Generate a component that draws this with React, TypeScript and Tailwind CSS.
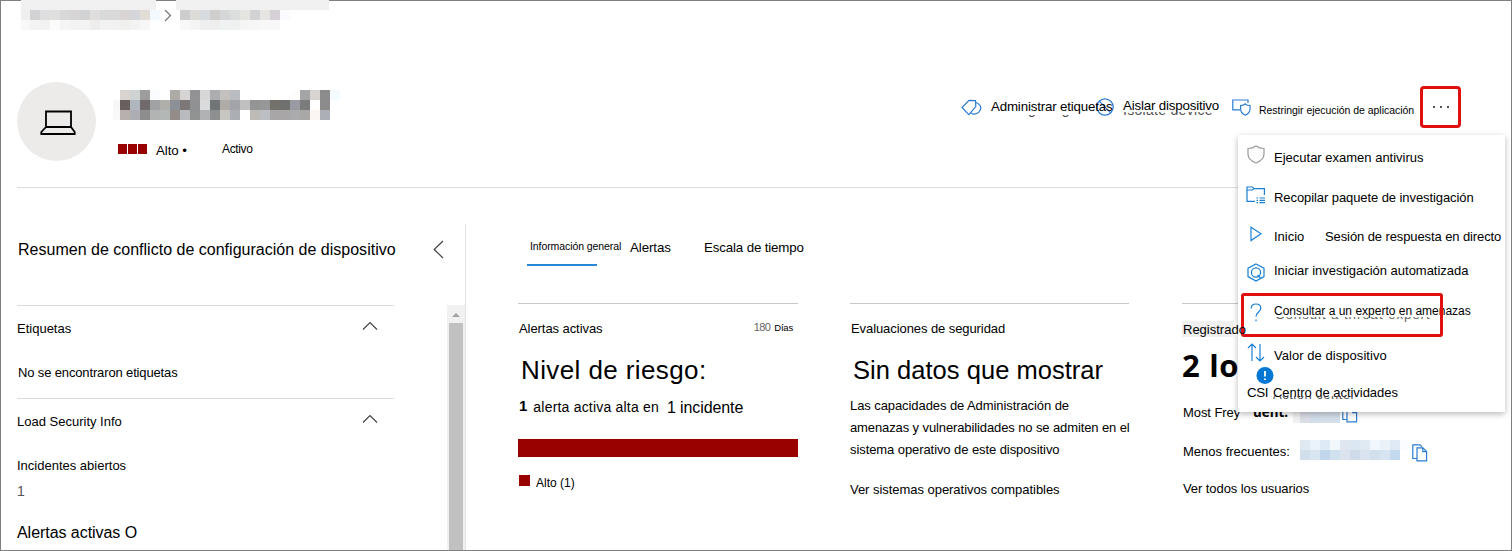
import type { ReactNode } from 'react';

const f = (...c: string[]) => c;

function Mosaic({ rows, cell = 10, first = 10 }: { rows: string[][]; cell?: number; first?: number }) {
  return (
    <div className="flex flex-col">
      {rows.map((row, y) => (
        <div key={y} className="flex">
          {row.map((color, x) => (
            <span key={x} className="block shrink-0" style={{ width: x === 0 ? first : cell, height: cell, background: color }} />
          ))}
        </div>
      ))}
    </div>
  );
}

const crumbOne = [
  f('#f0efee', '#d2d2d4', '#dedee0', '#e1dfdd', '#d9d8d9', '#d7d5d5', '#d1d2d4', '#dfdedd', '#d8dad9', '#d9d9d9', '#d8d5d4', '#d4d6da', '#e1dcd6', '#f3faff'),
  f('#f8f8f8', '#f3f3f3', '#f2f2f2', '#fbfbf9', '#f5f5f5', '#f3f3f3', '#f3f3f3', '#eeedec', '#f2f2f2', '#f1f1f1', '#f0f0ee', '#f3f3f3', '#f7f7f7', '#ffffff'),
];
const crumbTwo = [
  f('#cecdcd', '#dcdbd7', '#d7dbdf', '#cfcecd', '#d6d7d9', '#dcdddd', '#e4e4e1', '#d1d2d4', '#e6e5e2', '#d5d1d7', '#fafaff'),
  f('#f8f8f8', '#f4f4f4', '#efefef', '#eeeeee', '#eff2f2', '#eef1f0', '#f5f5f5', '#f5f6f5', '#f8f8f8', '#f7f7f7', '#ffffff'),
];
const deviceName = [
  f('#ffffff', '#dad4d1', '#ced2d2', '#9e9d9e', '#fafbff', '#ffffff', '#aeaaa6', '#d6d5d3', '#929294', '#d7d7d7', '#abadb1', '#c4c0bd', '#b9bdc2', '#ffffff', '#ffffff', '#ffffff', '#ffffff', '#ffffff', '#fefdfb', '#a4a5a7', '#d8d4d2', '#8c8c8c', '#f3fbfe'),
  f('#f7f7f7', '#69605d', '#afb6be', '#706a6c', '#a1a2a4', '#b0afab', '#8b9196', '#7e7777', '#909192', '#dadbdd', '#707577', '#afaca8', '#a2a4aa', '#c0c0c0', '#929594', '#959799', '#74706a', '#6e716d', '#9a9ba2', '#797c7a', '#ffffff', '#8c8c8c', '#ffffff'),
  f('#f9f9f9', '#b8b0ad', '#acaeb4', '#8d8d8d', '#b2b3b3', '#b3b7b6', '#938c88', '#b9bbbf', '#919292', '#b0b1b3', '#8e8f90', '#c7c6c1', '#abaeb3', '#ffffff', '#bebab5', '#bbbec3', '#a8a6a6', '#a8a6a6', '#abaaad', '#aaa8a7', '#fcf6f2', '#acafb5', '#ffffff'),
];
const userOne = [
  f('#f1f1f2', '#dbdee6', '#d2deea', '#d6dfe9', '#d3dfeb'),
  f('#f1f1f2', '#dbdee6', '#d2deea', '#d6dfe9', '#d3dfeb'),
];
const userTwo = [
  f('#dfe9f2', '#eaf3fb', '#dde9f4', '#f2f7fc', '#e0e7f1', '#dbe7f1', '#e0eaf3', '#f1f7fc', '#eaf1f8', '#dfe9f4', '#fbfcff'),
  f('#d1dfec', '#d9e5f1', '#c1d6ea', '#d1e0ee', '#dbe4ee', '#cfdbea', '#dae4f0', '#d2dfed', '#d6e5f1', '#c3d9ed', '#ffffff'),
];

function Svg({ w, h, color = '#2b7cd3', children, className = '' }: { w: number; h: number; color?: string; children: ReactNode; className?: string }) {
  return (
    <svg width={w} height={h} viewBox={`0 0 ${w} ${h}`} fill="none" stroke={color} strokeWidth="1.2" className={`block shrink-0 ${className}`}>
      {children}
    </svg>
  );
}

function CopyIcon({ className = '' }: { className?: string }) {
  return (
    <Svg w={16} h={18} className={className}>
      <path d="M5 14.5H.8V.8H8L10 2.8" />
      <path d="M5 3.8H10.8L14.6 7.6V16.8H5Z" />
      <path d="M10.8 3.8V7.6H14.6" />
    </Svg>
  );
}

function Section({ title, children, className }: { title: string; children: ReactNode; className: string }) {
  return (
    <section className={`border-t border-[#dcdcdc] ${className}`}>
      <div className="flex h-[44px] items-center justify-between pr-4">
        <h3 className="mt-[2px] text-[13px]">{title}</h3>
        <Svg w={16} h={10} color="#444" className="-mt-[5px]">
          <path d="M1 8.5L8 1.5L15 8.5" />
        </Svg>
      </div>
      {children}
    </section>
  );
}

function Toolbar() {
  return (
    <div className="flex h-8 items-center whitespace-nowrap text-[13.33px]">
      <Svg w={21} h={17}>
        <path d="M1 8.5L8 1.4L14.5 1.6L14.8 7.6L7.8 15.6Z" />
        <path d="M14.6 3.2C19 5 21 8 19 11.5C17.5 14.5 14 15.5 11.5 14.8L9.5 13.8" />
      </Svg>
      <span className="relative ml-[9px] w-[105px] tracking-[-0.18px]">
        Administrar etiquetas
        <span className="absolute left-0 top-[18px] block h-[2px] overflow-hidden text-[14px] leading-[15px] tracking-[0.5px] text-[#444]">
          <span className="-mt-[13px] block">Manage tags</span>
        </span>
      </span>
      <Svg w={18} h={18}>
        <circle cx="9" cy="9" r="8.2" />
        <path d="M3.2 3.2L14.8 14.8" />
      </Svg>
      <span className="relative ml-[9px] mt-[-2px] w-[109px] tracking-[-0.18px]">
        Aislar dispositivo
        <span className="absolute left-0 top-[16px] block h-[4px] overflow-hidden text-[14px] leading-[15px] tracking-[0.3px] text-[#555]">
          <span className="-mt-[9px] block">Isolate device</span>
        </span>
      </span>
      <Svg w={19} h={17}>
        <path d="M8 10.8H.8V1H16V4" />
        <path d="M13.3 4.8C12 6 10.5 6.5 8.6 6.5V10C8.6 13 10.5 15 13.3 16.2C16 15 18 13 18 10V6.5C16 6.5 14.5 6 13.3 4.8Z" />
      </Svg>
      <span className="ml-[8px] mt-[8px] w-[161px] text-[10.5px] tracking-[-0.04px]">Restringir ejecución de aplicación</span>
      <button className="flex h-[42px] w-[41px] shrink-0 items-center justify-center gap-[5px] rounded-[4px] border-[3px] border-[#e01010]">
        <i className="size-[2px] bg-[#555]" />
        <i className="size-[2px] bg-[#555]" />
        <i className="size-[2px] bg-[#555]" />
      </button>
    </div>
  );
}

function Item({ icon, children, className }: { icon: ReactNode; children: ReactNode; className: string }) {
  return (
    <li className={`flex items-center whitespace-nowrap ${className}`}>
      <span className="flex w-[20px] shrink-0 justify-center">{icon}</span>
      {children}
    </li>
  );
}

function Menu() {
  return (
    <div className="absolute left-[1237px] top-[134px] h-[277px] w-[267px] bg-white pl-[8px] text-[13px] shadow-[0_2px_6px_rgba(0,0,0,0.28)]">
      <ul className="flex flex-col">
        <Item
          className="h-[40px]"
          icon={
            <Svg w={18} h={19} color="#999" className="-mt-[2px]">
              <path d="M9 1C7 2.5 4 3.5 1 3.5V9C1 13 4 16 9 18C14 16 17 13 17 9V3.5C14 3.5 11 2.5 9 1Z" />
            </Svg>
          }
        >
          <span className="ml-[8px] mt-[5px]">Ejecutar examen antivirus</span>
        </Item>
        <Item
          className="h-[40px]"
          icon={
            <Svg w={20} h={18} color="#1a80d6">
              <path d="M9 15.4H1V1H6.5L8 2.6H18.4V9M1 4H6.5L8 2.6" />
              <path d="M10.5 12H12M13.5 12H19M10.5 14.3H12M13.5 14.3H19M10.5 16.6H12M13.5 16.6H19" />
            </Svg>
          }
        >
          <span className="ml-[8px] mt-[5px] tracking-[-0.08px]">Recopilar paquete de investigación</span>
        </Item>
        <Item
          className="h-[38px]"
          icon={
            <Svg w={12} h={16} color="#1a80d6">
              <path d="M1 1.2L11 7.8L1 14.6Z" />
            </Svg>
          }
        >
          <span className="ml-[8px] mt-[6px] w-[31px]">Inicio</span>
          <span className="ml-[20px] mt-[6px] tracking-[-0.1px]">Sesión de respuesta en directo</span>
        </Item>
        <Item
          className="h-[38px]"
          icon={
            <Svg w={18} h={19} color="#1a80d6">
              <path d="M9 1L17 5.2V13.6L9 18L1 13.6V5.2Z" />
              <circle cx="9" cy="9.5" r="4.6" />
              <path d="M10.5 12L13.5 15" />
            </Svg>
          }
        >
          <span className="ml-[8px] -mt-[2px] tracking-[-0.02px]">Iniciar investigación automatizada</span>
        </Item>
        <Item
          className="h-[42px]"
          icon={
            <Svg w={12} h={19} color="#1a80d6">
              <path d="M1.2 5.5C1.2 2.8 3 1 6 1C9 1 10.8 2.8 10.8 5.2C10.8 9 6 9.2 6 13.8M6 16.6V18.2" />
            </Svg>
          }
        >
          <span className="relative ml-[8px] -mt-[2px] text-[12px]">
            Consultar a un experto en amenazas
            <span className="absolute left-[1px] top-[15px] block h-[5px] overflow-hidden text-[13.33px] leading-[15px] tracking-[0.9px] text-[#666]">
              <span className="-mt-[10px] block">Consult a threat expert</span>
            </span>
          </span>
        </Item>
        <Item
          className="h-[38px]"
          icon={
            <Svg w={18} h={19} color="#1a80d6">
              <path d="M5 18V1M1 5L5 1L9 5M13 1V18M9 14L13 18L17 14" />
            </Svg>
          }
        >
          <span className="ml-[8px] mt-[7px] tracking-[0.05px]">Valor de dispositivo</span>
        </Item>
        <li className="flex h-[41px] flex-col whitespace-nowrap">
          <Svg w={18} h={17} color="none" className="-mt-[4px] ml-[10px]">
            <circle cx="9" cy="8.5" r="8.5" fill="#0078d4" />
            <path d="M9 4V9.6M9 11.4V13" stroke="#fff" strokeWidth="1.8" />
          </Svg>
          <span className="flex pl-[1px] leading-[18px]">
            <span className="w-[26px] text-[13.33px] tracking-[-0.4px]">CSI</span>
            <span className="relative tracking-[-0.04px]">
              Centro de actividades
              <span className="absolute left-0 top-[12px] block h-[4px] overflow-hidden leading-[15px] tracking-[0.5px] text-[#555]">
                <span className="-mt-[9px] block">Action center</span>
              </span>
            </span>
          </span>
        </li>
      </ul>
      <div className="absolute left-[3px] top-[158px] h-[44px] w-[202px] rounded-[3px] border-[3px] border-[#e01010]" />
    </div>
  );
}

export default function App() {
  return (
    <div className="relative h-[551px] w-[1512px] border border-[#7f7f7f] bg-white font-['Liberation_Sans',Arial,sans-serif] text-black">
      <nav className="-mt-px flex h-[30px] pl-[20px]">
        <div className="w-[135px]">
          <div className="h-[10px] bg-[#f0f0f0]" />
          <Mosaic rows={crumbOne} first={9} />
        </div>
        <Svg w={8} h={13} color="#777" className="relative ml-[8px] mt-[9px]">
          <path d="M1 1L6.5 6.5L1 12" />
        </Svg>
        <div className="ml-[4px] w-[153px]">
          <div className="h-[10px] bg-[#f0f0f0]" />
          <div className="pl-[4px]">
            <Mosaic rows={crumbTwo} />
          </div>
        </div>
      </nav>

      <header className="mx-4 mt-[52px] flex h-[106px] items-start border-b border-[#dcdcdc]">
        <div className="flex size-[79px] items-center justify-center rounded-full bg-[#ecebea]">
          <Svg w={36} h={26} color="#000" className="mt-[3px] ml-[2px]">
            <path d="M6 1.5H31V17H6Z M6 17L1.3 22V24H34.7V22L31 17" strokeWidth="1.8" />
          </Svg>
        </div>
        <div className="ml-[17px] w-[848px] pt-[8px]">
          <Mosaic rows={deviceName} first={7} />
          <div className="ml-[5px] mt-[19px] flex h-[20px] items-center">
            <div className="-mt-[1px] flex gap-px">
              <i className="h-[10px] w-[9px] bg-[#990000]" />
              <i className="h-[10px] w-[9px] bg-[#990000]" />
              <i className="h-[10px] w-[9px] bg-[#990000]" />
            </div>
            <span className="ml-[9px] mt-[3px] w-[66px] text-[13.33px] tracking-[-0.1px]">Alto •</span>
            <span className="text-[12px] tracking-[-0.35px]">Activo</span>
          </div>
        </div>
        <div className="mt-[9px]">
          <Toolbar />
        </div>
      </header>

      <div className="flex h-[362px]">
        <aside className="mt-[36px] flex w-[465px] flex-col border-r border-[#e1e1e1]">
          <div className="flex h-[81px] pl-[17px] pr-[21px]">
            <h2 className="mt-[15px] flex-1 whitespace-nowrap text-[16px] leading-[22px] tracking-[0.01px]">Resumen de conflicto de configuración de dispositivo</h2>
            <Svg w={11} h={19} color="#444" className="mt-[16px]">
              <path d="M10 1L1.2 9.5L10 18" />
            </Svg>
          </div>
          <div className="flex flex-1 justify-between">
            <div className="ml-4 w-[377px]">
              <Section title="Etiquetas" className="h-[93px]">
                <p className="mt-[15px] pl-px text-[13px] leading-4 tracking-[-0.14px]">No se encontraron etiquetas</p>
              </Section>
              <Section title="Load Security Info" className="h-[152px]">
                <p className="mt-[15px] text-[13px] leading-4">Incidentes abiertos</p>
                <p className="mt-[9px] text-[14px] leading-4 text-[#555]">1</p>
                <p className="mt-[24px] text-[16px] leading-5 tracking-[-0.05px]">Alertas activas O</p>
              </Section>
            </div>
            <div className="flex w-[18px] flex-col items-center bg-[#f1f1f1]">
              <span className="mt-[8px] mb-[6px] h-0 w-0 border-x-4 border-b-4 border-x-transparent border-b-[#a3a3a3]" />
              <span className="w-[14px] flex-1 bg-[#c1c1c1]" />
            </div>
          </div>
        </aside>

        <main className="flex-1 pl-[52px]">
          <div className="ml-[9px] mt-[49px] flex h-[30px] whitespace-nowrap text-[13.33px] leading-[22px]">
            <span className="w-[103px]">
              <span className="block h-[27px] pl-[3px] text-[10.5px] leading-[19px] tracking-[-0.08px]">Información general</span>
              <span className="block h-[2px] w-[70px] bg-[#2b88d8]" />
            </span>
            <span className="w-[74px] tracking-[-0.1px]">Alertas</span>
            <span className="tracking-[-0.15px]">Escala de tiempo</span>
          </div>
          <div className="mt-[36px] grid grid-cols-[280px_280px_279px] gap-x-[52px]">
            <section className="border-t border-[#c8c8c8]">
              <div className="flex h-[48px] items-center justify-between pr-[5px]">
                <h3 className="mt-[2px] pl-px text-[13px] tracking-[-0.07px]">Alertas activas</h3>
                <span className="-mt-[2px] flex items-center gap-[4px] text-[11px]">
                  <span className="tracking-[-0.6px] text-[#666]">180</span>
                  <span className="mt-[2px] text-[9.5px] tracking-[-0.2px]">Días</span>
                </span>
              </div>
              <p className="pl-[3px] text-[26px] leading-[36px] tracking-[0.4px]">Nivel de riesgo:</p>
              <p className="flex h-[38px] items-center pl-px">
                <b className="-mt-[1px] text-[15px]">1</b>
                <span className="ml-[6px] text-[14px] tracking-[0.2px]">alerta activa alta en</span>
                <span className="ml-[8px] mt-[2px] text-[16px] tracking-[-0.1px]">1 incidente</span>
              </p>
              <div className="mt-[13px] h-[18px] bg-[#990000]" />
              <div className="mt-[13px] flex items-center pl-px text-[12px]">
                <i className="-mt-[1px] size-[11px] bg-[#990000]" />
                <span className="ml-[6px] mt-[4px]">Alto (1)</span>
              </div>
            </section>
            <section className="mr-px whitespace-nowrap border-t border-[#c8c8c8] text-[13px] tracking-[-0.08px]">
              <h3 className="h-[48px] pl-px leading-[50px]">Evaluaciones de seguridad</h3>
              <p className="pl-[3px] text-[25.5px] leading-[36px] tracking-[0.03px]">Sin datos que mostrar</p>
              <p className="mt-[7px] leading-[22px]">
                Las capacidades de Administración de
                <br />
                <span className="tracking-[-0.11px]">amenazas y vulnerabilidades no se admiten en el</span>
                <br />
                sistema operativo de este dispositivo
              </p>
              <p className="mt-[18px] leading-[22px] tracking-[-0.04px]">Ver sistemas operativos compatibles</p>
            </section>
            <section className="whitespace-nowrap border-t border-[#c8c8c8] text-[13px]">
              <h3 className="flex h-[48px] items-center pt-px">
                <span className="relative z-10 h-[16px] w-[52px] bg-[#f0f0f0] pl-px leading-[17px]">Registrado</span>
              </h3>
              <p className="-mt-[3px] font-['Open_Sans',sans-serif] text-[31px] font-bold leading-[32px] tracking-[0.7px]">2 logged</p>
              <div className="mt-[17px] flex h-[30px] items-center pl-px">
                <span className="w-[70px] tracking-[-0.08px]">Most Frey</span>
                <b className="-mt-[2px] w-[40px] font-['Open_Sans',sans-serif] text-[13.33px] leading-[14px]">uent:</b>
                <Mosaic rows={userOne} first={7} />
                <CopyIcon className="ml-[2px] mt-[1px]" />
              </div>
              <div className="mt-[9px] flex h-[30px] items-center pl-px">
                <span className="w-[117px]">Menos frecuentes:</span>
                <div className="-mt-[4px]">
                  <Mosaic rows={userTwo} />
                </div>
                <CopyIcon className="ml-[2px] mt-[2px]" />
              </div>
              <p className="mt-[13px] pl-px leading-[18px] tracking-[-0.08px]">Ver todos los usuarios</p>
            </section>
          </div>
        </main>
      </div>
      <Menu />
    </div>
  );
}
